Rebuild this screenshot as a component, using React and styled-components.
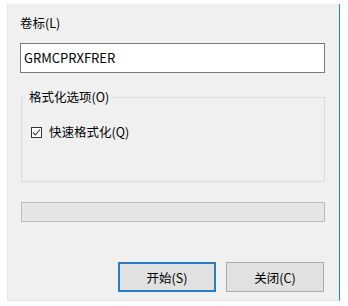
import React from 'react';
import styled, { createGlobalStyle } from 'styled-components';

const GlobalStyle = createGlobalStyle`
    body {
        margin: 0;
        background: #ffffff;
        font-family: "Noto Sans CJK SC", "Noto Sans", sans-serif;
        color: #000000;
    }
`;

const Window = styled.div`
    margin: 4px 0 0 7px;
    width: 333px;
    box-sizing: border-box;
    background: #f0f0f0;
    border-left: 1px solid #e6e6e6;
    border-bottom: 1px solid #e4e4e4;
    border-right: 1px solid #1c7ed6;
    padding: 10px 14px 8px 12px;
    display: flex;
    flex-direction: column;
`;

const Label = styled.div`
    font-size: 12.5px;
    line-height: 18px;
    height: 18px;
`;

const TextBox = styled.div`
    margin-top: 11px;
    height: 30px;
    box-sizing: border-box;
    border: 1px solid #7a7a7a;
    background: #ffffff;
    font-size: 13px;
    line-height: 28px;
    padding-left: 3px;
`;

const Group = styled.fieldset`
    margin: 15px 0 0 1px;
    padding: 0 0 40px 0;
    border: 1px solid #dcdcdc;
    min-width: 0;
`;

const Legend = styled.legend`
    margin-left: 4px;
    padding: 0 3px;
    font-size: 12.5px;
    line-height: 18px;
`;

const CheckRow = styled.label`
    margin: 17px 0 0 9px;
    display: flex;
    align-items: center;
    gap: 7px;
    font-size: 12.5px;
    line-height: 18px;
    height: 18px;
`;

const Box = styled.span`
    width: 11px;
    height: 11px;
    box-sizing: border-box;
    border: 1px solid #333333;
    background: #ffffff;
    display: flex;
    align-items: center;
    justify-content: center;
`;

const Progress = styled.div`
    margin: 20px 0 0 1px;
    height: 20px;
    box-sizing: border-box;
    border: 1px solid #bcbcbc;
    background: #e6e6e6;
`;

const Buttons = styled.div`
    margin-top: 40px;
    display: flex;
    justify-content: flex-end;
    gap: 10px;
    padding-right: 1px;
`;

const Button = styled.button`
    width: 98px;
    height: 30px;
    box-sizing: border-box;
    background: #e1e1e1;
    border: ${p => (p.$primary ? '2px solid #2a7bc0' : '1px solid #adadad')};
    font-family: "Noto Sans CJK SC", "Noto Sans", sans-serif;
    font-size: 12.5px;
    color: #000000;
    padding: 0;
`;

const App = () => {
    return (
        <>
            <GlobalStyle />
            <Window>
                <Label>卷标(L)</Label>
                <TextBox>GRMCPRXFRER</TextBox>
                <Group>
                    <Legend>格式化选项(O)</Legend>
                    <CheckRow>
                        <Box>
                            <svg width="9" height="9" viewBox="0 0 9 9">
                                <path d="M1 4.5 L3.5 7 L8 1.5" fill="none" stroke="#333" strokeWidth="1.1" />
                            </svg>
                        </Box>
                        快速格式化(Q)
                    </CheckRow>
                </Group>
                <Progress />
                <Buttons>
                    <Button $primary>开始(S)</Button>
                    <Button>关闭(C)</Button>
                </Buttons>
            </Window>
        </>
    );
};

export default App;
